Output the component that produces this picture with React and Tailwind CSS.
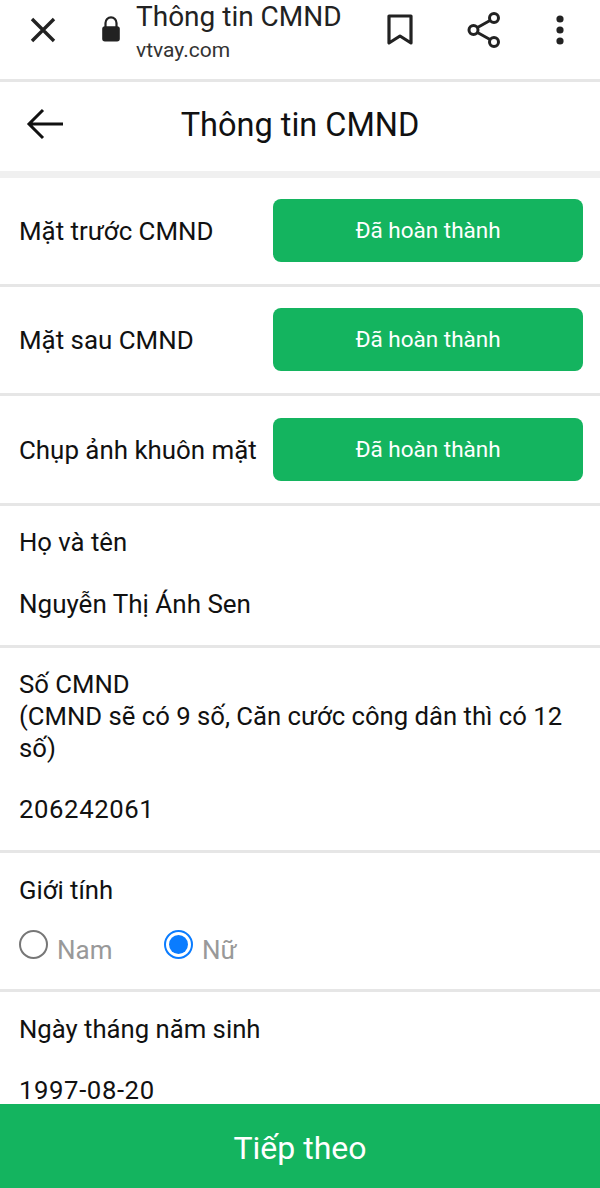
import { useState } from "react";

function Divider() {
  return <div className="h-[3px] bg-[#e6e6e6]"></div>;
}

function DocRow({ label, rowClass, shift }) {
  return (
    <div className={"flex items-center justify-between pl-[19px] pr-[17px] " + rowClass}>
      <span className="mt-[1px] text-[25.9px] text-[#111]">{label}</span>
      <button className={"h-[63px] w-[310px] rounded-lg bg-[#14b45f] pt-[2px] text-[22.5px] text-white " + shift}>
        Đã hoàn thành
      </button>
    </div>
  );
}

function BrowserBar() {
  return (
    <div className="flex h-[79px] items-center bg-white pb-[20px] text-[#222]">
      <svg className="ml-[27px] h-8 w-8" viewBox="0 0 32 32" fill="none" stroke="#222" strokeWidth="3.4">
        <path d="M5 5 L27 27 M27 5 L5 27" />
      </svg>
      <svg className="ml-[41px] h-[29px] w-[22px]" viewBox="0 0 20 26" fill="#222">
        <path d="M5 11 V7 a5 5 0 0 1 10 0 V11" fill="none" stroke="#222" strokeWidth="2" />
        <rect x="2" y="10" width="16" height="14" rx="2.5" />
      </svg>
      <div className="ml-[14px] mt-[5px] flex w-[250px] flex-col">
        <span className="text-[28px] leading-[30px]">Thông tin CMND</span>
        <span className="mt-[6px] text-[21px] leading-[24px] text-[#333]">vtvay.com</span>
      </div>
      <svg className="h-[34px] w-[28px]" viewBox="0 0 28 34" fill="none" stroke="#222" strokeWidth="3.2">
        <path d="M3 3 H25 V30 L14 23 L3 30 Z" strokeLinejoin="round" />
      </svg>
      <svg className="ml-[53px] h-[38px] w-[36px]" viewBox="0 0 36 38" fill="none" stroke="#222" strokeWidth="3">
        <circle cx="27" cy="7" r="4.5" />
        <circle cx="6.5" cy="19" r="4.5" />
        <circle cx="27" cy="31" r="4.5" />
        <path d="M10.5 16.5 L23 9.5 M10.5 21.5 L23 28.5" />
      </svg>
      <svg className="ml-[52px] h-[32px] w-[10px]" viewBox="0 0 10 32" fill="#222">
        <circle cx="5" cy="5" r="3.6" />
        <circle cx="5" cy="16" r="3.6" />
        <circle cx="5" cy="27" r="3.6" />
      </svg>
    </div>
  );
}

function App() {
  const [gender] = useState("nu");

  return (
    <div className="relative h-[1188px] w-[600px] overflow-hidden bg-white font-['Roboto',sans-serif]">
      <BrowserBar />
      <Divider />
      <div className="relative flex h-[89px] items-center justify-center pb-[2px]">
        <svg className="absolute left-[26px] top-[26px] h-[32px] w-[38px]" viewBox="0 0 38 32" fill="none" stroke="#111" strokeWidth="3">
          <path d="M37 16 H3 M17 2 L3 16 L17 30" />
        </svg>
        <span className="text-[32.5px] text-[#111]">Thông tin CMND</span>
      </div>
      <div className="h-[7px] bg-[#f0f0f0]"></div>

      <DocRow label="Mặt trước CMND" rowClass="h-[106px]" shift="mb-[2px]" />
      <Divider />
      <DocRow label="Mặt sau CMND" rowClass="h-[106px]" shift="mb-[2px]" />
      <Divider />
      <DocRow label="Chụp ảnh khuôn mặt" rowClass="h-[107px]" shift="mb-[1px]" />
      <Divider />

      <div className="h-[139px] px-[19px] pt-[20px] text-[25.7px] text-[#111]">
        <div className="leading-[32px]">Họ và tên</div>
        <div className="mt-[30px] text-[26px] leading-[32px]">Nguyễn Thị Ánh Sen</div>
      </div>
      <Divider />

      <div className="h-[202px] px-[19px] pt-[20px] text-[25.7px] text-[#111]">
        <div className="leading-[32px]">
          Số CMND
          <br />
          (CMND sẽ có 9 số, Căn cước công dân thì có 12 số)
        </div>
        <div className="mt-[29px] leading-[32px] tracking-[0.6px]">206242061</div>
      </div>
      <Divider />

      <div className="h-[136px] px-[19px] pt-[21px]">
        <div className="text-[25.7px] leading-[32px] text-[#111]">Giới tính</div>
        <div className="mt-[24px] flex text-[26px] text-[#999]">
          <div className="flex w-[145px] items-start">
            <span className="h-[29px] w-[29px] rounded-full border-2 border-[#777]"></span>
            <span className="ml-[9px] mt-[4px] leading-[32px]">Nam</span>
          </div>
          <div className="flex items-start">
            <span className={"flex h-[29px] w-[29px] items-center justify-center rounded-full border-2 " + (gender === "nu" ? "border-[#0a7cff]" : "border-[#777]")}>
              <span className="h-[19px] w-[19px] rounded-full bg-[#0a7cff]"></span>
            </span>
            <span className="ml-[9px] mt-[4px] leading-[32px]">Nữ</span>
          </div>
        </div>
      </div>
      <Divider />

      <div className="px-[19px] pt-[21px] text-[25.7px] text-[#111]">
        <div className="leading-[32px]">Ngày tháng năm sinh</div>
        <div className="mt-[29px] leading-[32px] tracking-[0.6px]">1997-08-20</div>
      </div>

      <button className="absolute bottom-0 left-0 h-[84px] w-full bg-[#14b45f] pt-[3px] text-[32px] text-white">
        Tiếp theo
      </button>
    </div>
  );
}

export default App;
